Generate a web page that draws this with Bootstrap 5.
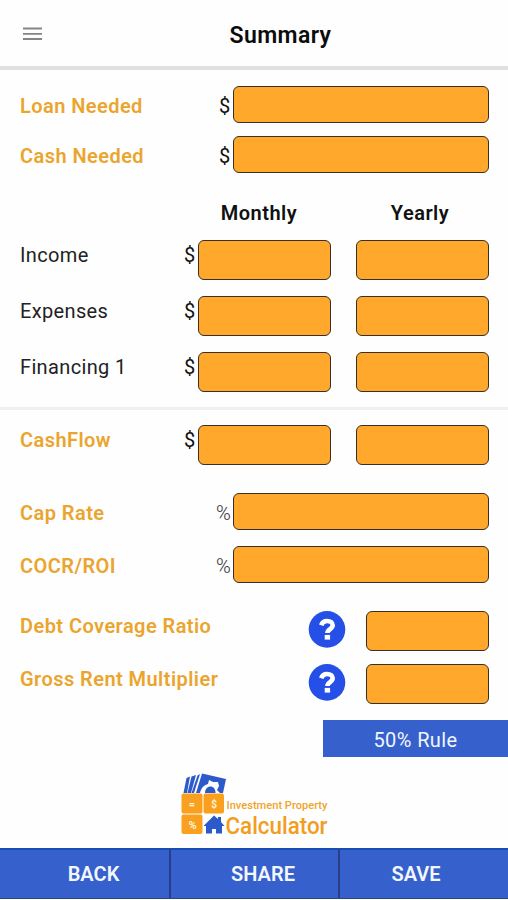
<!DOCTYPE html>
<html lang="en">
<head>
<meta charset="utf-8">
<meta name="viewport" content="width=device-width, initial-scale=1">
<title>Summary</title>
<link href="https://cdn.jsdelivr.net/npm/bootstrap@5.3.0/dist/css/bootstrap.min.css" rel="stylesheet">
<style>
body{font-family:Roboto,"Liberation Sans",sans-serif;background:#fefefe;color:#111;font-size:20px;line-height:24px;height:900px;overflow:hidden}
.topbar{height:70px;border-bottom:4px solid #e0e0e0;padding:2px 0 0 23px}
.menu-btn{width:19px;line-height:0}
.page-title{font-size:23px;font-weight:600;line-height:28px;color:#0c0c0c;padding:3px 42px 0 53px;letter-spacing:.4px}
.line{padding:0 19px 0 20px}
.key{color:#eaa52e;font-weight:600;letter-spacing:.44px}
.plain{color:#222;letter-spacing:.35px}
.head{font-weight:600;letter-spacing:.5px;width:133px}
.head-month{padding-right:11px}
.head-year{padding-right:5px}
.unit{width:18px;line-height:24px}
.unit-pct{color:#333;font-weight:300;padding-left:1px}
.field{background:#ffa82c;border:1.5px solid #3b2e24;border-radius:6px;height:40px}
.field-wide{width:256px;height:37px}
.field-half{width:133px}
.field-small{width:123px}
.split{gap:25px}
.t-low{padding-top:8px}
.t-mid{padding-top:3px}
.gap-a{margin-top:16px}.gap-b{margin-top:13px}.gap-c{margin-top:28px}.gap-d{margin-top:15px}
.rule{height:3px;background:#f0f0f0;margin-top:15px}
.help{width:38px;height:38px;margin:-1px 20px 0 0}
.half-rule{width:185px;height:37px;background:#3660cb;color:#f2f6ff;margin-top:16px;letter-spacing:.4px;padding-top:2px}
.brand{width:150px;height:66px;margin:14px 0 0 179px;overflow:visible}
.foot{height:51px;margin-top:11px;background:#3660cb;border-top:2px solid #154db5;border-bottom:1px solid #2c4488;color:#f2f6ff;font-weight:600}
.foot-item{width:169px;border-left:2px solid #2c3c85}
.foot-item:first-child{border-left:0;padding-left:18px}
.foot-item:nth-child(2){padding-left:17px}
.foot-item:last-child{width:170px;padding-right:16px}
</style>
<script src="https://cdn.jsdelivr.net/npm/bootstrap@5.3.0/dist/js/bootstrap.bundle.min.js"></script>
</head>
<body>
<header class="topbar d-flex align-items-center">
  <div class="menu-btn" role="button" aria-label="Menu">
    <svg width="19" height="14" viewBox="0 0 19 14"><path d="M0 1.5h19M0 6.8h19M0 12h19" stroke="#858585" stroke-width="1.8"/></svg>
  </div>
  <h1 class="page-title flex-grow-1 text-center mb-0">Summary</h1>
</header>
<main>
  <div class="line gap-a d-flex">
    <div class="key t-low flex-grow-1"><span>Loan Needed</span></div><div class="unit t-low ps-1">$</div><div class="field field-wide"></div>
  </div>
  <div class="line gap-b d-flex">
    <div class="key t-low flex-grow-1"><span>Cash Needed</span></div><div class="unit t-low ps-1">$</div><div class="field field-wide"></div>
  </div>
  <div class="line gap-c d-flex justify-content-end split">
    <div class="head head-month text-center">Monthly</div><div class="head head-year text-center">Yearly</div>
  </div>
  <div class="line gap-d d-flex">
    <div class="plain t-mid flex-grow-1"><span>Income</span></div><div class="unit t-mid ps-1">$</div>
    <div class="d-flex split"><div class="field field-half"></div><div class="field field-half"></div></div>
  </div>
  <div class="line gap-a d-flex">
    <div class="plain t-mid flex-grow-1"><span>Expenses</span></div><div class="unit t-mid ps-1">$</div>
    <div class="d-flex split"><div class="field field-half"></div><div class="field field-half"></div></div>
  </div>
  <div class="line gap-a d-flex">
    <div class="plain t-mid flex-grow-1"><span>Financing 1</span></div><div class="unit t-mid ps-1">$</div>
    <div class="d-flex split"><div class="field field-half"></div><div class="field field-half"></div></div>
  </div>
  <div class="rule"></div>
  <div class="line gap-d d-flex">
    <div class="key t-mid flex-grow-1"><span>CashFlow</span></div><div class="unit t-mid ps-1">$</div>
    <div class="d-flex split"><div class="field field-half"></div><div class="field field-half"></div></div>
  </div>
  <div class="line gap-c d-flex">
    <div class="key t-low flex-grow-1"><span>Cap Rate</span></div><div class="unit unit-pct t-low">%</div><div class="field field-wide"></div>
  </div>
  <div class="line gap-a d-flex">
    <div class="key t-low flex-grow-1"><span>COCR/ROI</span></div><div class="unit unit-pct t-low">%</div><div class="field field-wide"></div>
  </div>
  <div class="line gap-c d-flex">
    <div class="key t-mid flex-grow-1"><span>Debt Coverage Ratio</span></div>
    <svg class="help" viewBox="0 0 38 38"><circle cx="19" cy="19.400" r="18.300" fill="#254fe6"/><path d="M13.200 15.200C14.200 12 16 11 19 11c3.400 0 5.700 1.700 5.700 4.300 0 3.800-5.300 3.700-5.300 7.800" fill="none" stroke="#fff" stroke-width="4.600"/><path d="M16.700 24.900h5.400v4.700h-5.400z" fill="#fff"/></svg>
    <div class="field field-small"></div>
  </div>
  <div class="line gap-b d-flex">
    <div class="key t-mid flex-grow-1"><span>Gross Rent Multiplier</span></div>
    <svg class="help" viewBox="0 0 38 38"><circle cx="19" cy="19.400" r="18.300" fill="#254fe6"/><path d="M13.200 15.200C14.200 12 16 11 19 11c3.400 0 5.700 1.700 5.700 4.300 0 3.800-5.300 3.700-5.300 7.800" fill="none" stroke="#fff" stroke-width="4.600"/><path d="M16.700 24.900h5.400v4.700h-5.400z" fill="#fff"/></svg>
    <div class="field field-small"></div>
  </div>
  <div class="half-rule ms-auto d-flex align-items-center justify-content-center" role="button">50% Rule</div>
  <svg class="brand d-block" viewBox="179 771 150 66" font-family="Roboto,sans-serif">
    <g fill="#2c5acb">
      <path d="M186.500 778l3.500-1.500-3 16.500h-3.500z"/><path d="M191.500 776.500l4.500-1.500-5 18h-3.500z"/><path d="M197.500 775.500l2.500-1.500-6 19h-2.500z"/>
      <path d="M202 773.500l24 5.500-3 14h-27z"/>
    </g>
    <path d="M200 793c1-5 4-8 8-9l1-4 4 2 5 0 1 4-2 4 3 3z" fill="#fff"/>
    <path d="M205 793c0-4 2.500-6.500 5.500-6.500s5 2.500 5 6.500z" fill="#2c5acb"/>
    <g fill="#f9a01f"><rect x="181.500" y="793.500" width="21" height="20" rx="2"/><rect x="203.500" y="793.500" width="20.500" height="20" rx="2"/><rect x="181.500" y="814.500" width="21" height="19.500" rx="2"/></g>
    <g fill="#fff3d8" text-anchor="middle" font-weight="700"><text x="192" y="808" font-size="11">=</text><text x="214" y="808" font-size="10">$</text><text x="192.500" y="829" font-size="11">%</text></g>
    <path d="M214 815.500l4 3.500v-2h3v5l3.500 4h-2.500v7.500h-6v-4.500h-4v4.500h-6v-7.500h-2.500z" fill="#2c5acb"/>
    <text x="226.500" y="809" font-size="11.500" fill="#f0a428" font-weight="500" textLength="101" lengthAdjust="spacingAndGlyphs">Investment Property</text>
    <text x="225.500" y="833.500" font-size="24.500" fill="#f29d20" font-weight="500" textLength="102" lengthAdjust="spacingAndGlyphs">Calculator</text>
  </svg>
</main>
<footer class="foot d-flex">
  <div class="foot-item d-flex align-items-center justify-content-center" role="button">BACK</div>
  <div class="foot-item d-flex align-items-center justify-content-center" role="button">SHARE</div>
  <div class="foot-item d-flex align-items-center justify-content-center" role="button">SAVE</div>
</footer>
</body>
</html>
